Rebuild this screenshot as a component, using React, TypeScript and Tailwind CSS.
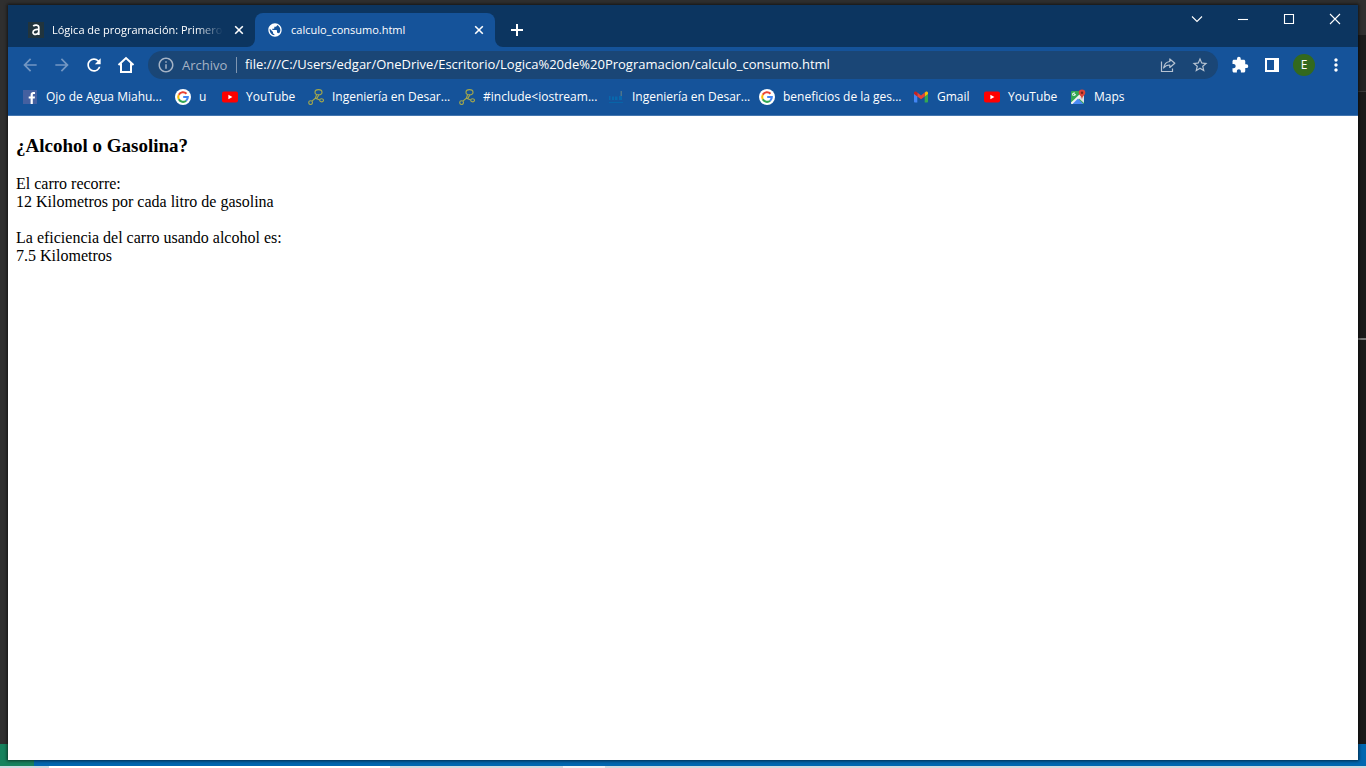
import type { ReactNode } from "react"
import {
  MdArrowBack,
  MdArrowForward,
  MdExtension,
  MdMoreVert,
  MdOutlineInfo,
  MdPublic,
  MdRefresh,
  MdStarBorder,
} from "react-icons/md"

const FacebookIcon = () => (
  <svg viewBox="0 0 16 16" className="size-4">
    <path d="M1 1h14v14H1z" fill="#4460a0" />
    <path d="M10.8 15V9.6h1.9l.3-2.1h-2.2V6.1c0-.6.2-1 1.1-1H13V3.2c-.2 0-.9-.1-1.7-.1-1.6 0-2.7 1-2.7 2.8v1.6H6.7v2.1h1.9V15z" fill="#fff" />
  </svg>
)

const GoogleIcon = () => (
  <svg viewBox="0 0 16 16" className="size-4">
    <circle cx="8" cy="8" r="8" fill="#fff" />
    <g fill="none" strokeWidth="2.1">
      <path d="M11.5 4.7A4.8 4.8 0 0 0 3.8 5.7" stroke="#ea4335" />
      <path d="M3.8 5.7A4.8 4.8 0 0 0 3.8 10.3" stroke="#fbbc05" />
      <path d="M3.8 10.3A4.8 4.8 0 0 0 11.1 11.7" stroke="#34a853" />
      <path d="M11.1 11.7A4.8 4.8 0 0 0 12.8 8H8.2" stroke="#4285f4" />
    </g>
  </svg>
)

const YouTubeIcon = () => (
  <svg viewBox="0 0 16 16" className="size-4">
    <rect y="2.5" width="16" height="11" rx="2" fill="#f00" />
    <path d="M6.4 5.7v4.6L10.4 8z" fill="#fff" />
  </svg>
)

const NodesIcon = () => (
  <svg viewBox="0 0 16 16" className="size-4" fill="none" stroke="#a5a84b" strokeWidth="1.1">
    <ellipse cx="10.5" cy="3.2" rx="3.5" ry="2.6" />
    <circle cx="2.6" cy="13.6" r="1.9" />
    <ellipse cx="13.6" cy="11.3" rx="1.9" ry="1.6" />
    <path d="M8.6 5.4 7.4 9.2l-3.5 3M7.4 9.2l4.4 1.7M11 5.8 8.8 9.4" />
  </svg>
)

const CourseIcon = () => (
  <svg viewBox="0 0 16 16" className="size-4">
    <path d="M1 7h1.5v4H1zM4 7.5h2V11H4zM7 7.5h2.5V11H7zM11 7h3v4h-3z" fill="#0868ad" />
    <path d="M1 13h14v1H1z" fill="#0864a8" />
    <path d="M12.5 2h1.5v5h-1.5z" fill="#4d758c" />
  </svg>
)

const GmailIcon = () => (
  <svg viewBox="0 0 16 16" className="size-4">
    <path d="M1 4v8.5c0 .5.4 1 1 1h2.3V6.6z" fill="#4285f4" />
    <path d="M15 4v8.5c0 .5-.4 1-1 1h-2.3V6.6z" fill="#34a853" />
    <path d="M11.7 3.7v3.8L15 5V3.9c0-1.3-1.4-1.9-2.3-1.2z" fill="#fbbc04" />
    <path d="M4.3 7.5V3.6L8 6.4l3.7-2.8v3.9L8 10.3z" fill="#ea4335" />
    <path d="M1 3.9V5l3.3 2.5V3.6l-1-.8C2.4 2.1 1 2.7 1 3.9z" fill="#c5221f" />
  </svg>
)

const MapsIcon = () => (
  <svg viewBox="0 0 16 16" className="size-4">
    <rect x="1" y="2" width="13" height="13" rx="1" fill="#34a853" />
    <path d="M1 13.5 12 3l2 2.5L4 15H2c-.6 0-1-.4-1-1z" fill="#f1f1f1" />
    <path d="M2.5 15 8 9.5l5.5 5.5z" fill="#4a89f3" />
    <path d="M9 9.5 14 14V6z" fill="#dce0e3" />
    <path d="M5.8 5H4.2v1h.7c-.7 1-2.1.3-1.7-.8.3-.7 1-.8 1.5-.4l.6-.7C4 3 2 3.8 2.2 5.6c.3 2.2 3.7 2 3.6-.6z" fill="#fff" />
    <path d="M12 .5a3.300 3.300 0 0 0-3.300 3.300c0 2.300 2.700 3 3.300 6.600.6-3.600 3.300-4.300 3.300-6.600A3.300 3.300 0 0 0 12 .5z" fill="#db4437" />
    <circle cx="12" cy="3.8" r="1.2" fill="#7b231e" />
  </svg>
)

const AluraIcon = () => (
  <svg viewBox="0 0 16 16" className="size-4 shrink-0">
    <path d="M0 0h16v16H0z" fill="#21343d" />
    <path d="M5.2 4.2C6.8 2.5 10.8 2.6 10.8 5.6V13M10.6 7.5C7.5 7.2 5 8 5 10.4c0 3 5.600 2.400 5.600-.6" fill="none" stroke="#fff" strokeWidth="1.7" />
  </svg>
)

const bookmarks: { label: string; width: string; icon: ReactNode }[] = [
  { label: "Ojo de Agua Miahu...", width: "w-[153px]", icon: <FacebookIcon /> },
  { label: "u", width: "w-[47px]", icon: <GoogleIcon /> },
  { label: "YouTube", width: "w-[86px]", icon: <YouTubeIcon /> },
  { label: "Ingeniería en Desar...", width: "w-[151px]", icon: <NodesIcon /> },
  { label: "#include<iostream...", width: "w-[149px]", icon: <NodesIcon /> },
  { label: "Ingeniería en Desar...", width: "w-[151px]", icon: <CourseIcon /> },
  { label: "beneficios de la ges...", width: "w-[154px]", icon: <GoogleIcon /> },
  { label: "Gmail", width: "w-[71px]", icon: <GmailIcon /> },
  { label: "YouTube", width: "w-[86px]", icon: <YouTubeIcon /> },
  { label: "Maps", width: "w-[70px]", icon: <MapsIcon /> },
]

function IconButton({ label, className = "", children }: { label: string; className?: string; children: ReactNode }) {
  return (
    <button type="button" aria-label={label} className={`flex h-7 w-8 shrink-0 items-center justify-center ${className}`}>
      {children}
    </button>
  )
}

function WindowButton({ label, d }: { label: string; d: string }) {
  return (
    <button type="button" aria-label={label} className="flex h-7 w-[46px] items-center justify-center">
      <svg viewBox="0 0 12 12" className="size-3" fill="none" stroke="#fff" strokeWidth="1.1">
        <path d={d} />
      </svg>
    </button>
  )
}

function TabClose() {
  return (
    <button type="button" aria-label="Cerrar pestaña" className="flex size-4 shrink-0 items-center justify-center">
      <svg viewBox="0 0 16 16" className="size-4" stroke="#fff" strokeWidth="1.6">
        <path d="m4.2 4.2 7.6 7.6M11.8 4.2l-7.6 7.6" />
      </svg>
    </button>
  )
}

function TabStrip() {
  return (
    <div className="flex h-[42px] bg-[#0c3560] pl-2">
      <div className="mt-2 flex h-[34px] w-[239px] items-center gap-2 pr-2 pl-3">
        <AluraIcon />
        <span className="min-w-0 flex-1 text-[11px] whitespace-nowrap [mask-image:linear-gradient(to_right,black_84%,transparent)]">
          Lógica de programación: Primero
        </span>
        <TabClose />
      </div>
      <svg viewBox="0 0 8 8" className="-ml-2 size-2 shrink-0 self-end" fill="#15539a">
        <path d="M8 0v8H0a8 8 0 0 0 8-8z" />
      </svg>
      <div className="mt-2 flex h-[34px] w-60 items-center gap-2 rounded-t-lg bg-[#15539a] pr-2 pl-3">
        <MdPublic className="size-4 shrink-0" />
        <span className="min-w-0 flex-1 text-[11px] whitespace-nowrap">calculo_consumo.html</span>
        <TabClose />
      </div>
      <svg viewBox="0 0 8 8" className="size-2 shrink-0 self-end" fill="#15539a">
        <path d="M0 0v8h8a8 8 0 0 1-8-8z" />
      </svg>
      <button type="button" aria-label="Nueva pestaña" className="mt-[11px] flex size-7 items-center justify-center">
        <svg viewBox="0 0 12 12" className="size-3" stroke="#fff" strokeWidth="2">
          <path d="M6 0v12M0 6h12" />
        </svg>
      </button>
      <div className="ml-auto flex">
        <WindowButton label="Buscar pestañas" d="m1 3.5 5 5 5-5" />
        <WindowButton label="Minimizar" d="M1 6.5h10" />
        <WindowButton label="Maximizar" d="M1.5 1.5h9v9h-9z" />
        <WindowButton label="Cerrar" d="m1 1 10 10M11 1 1 11" />
      </div>
    </div>
  )
}

function Toolbar() {
  return (
    <div className="flex h-9 items-center px-[6px]">
      <IconButton label="Atrás" className="text-[#7397c3]">
        <MdArrowBack className="size-5" />
      </IconButton>
      <IconButton label="Adelante" className="text-[#7397c3]">
        <MdArrowForward className="size-5" />
      </IconButton>
      <IconButton label="Recargar">
        <MdRefresh className="size-5" />
      </IconButton>
      <IconButton label="Inicio">
        <svg viewBox="0 0 18 18" className="size-[18px]" fill="none" stroke="#fff" strokeWidth="2">
          <path d="M1.5 9 9 2l7.5 7M4 7.5V16h10V7.5" />
        </svg>
      </IconButton>
      <div className="mx-[6px] flex h-7 flex-1 items-center rounded-full bg-[#1a4676] pr-[2px] pl-[9px]">
        <MdOutlineInfo className="size-[18px] shrink-0 text-[#a5b3c5]" />
        <label htmlFor="url" className="ml-[7px] w-[55px] border-r border-[#7f96b1] text-[13px] leading-4 text-[#a5b3c5]">
          Archivo
        </label>
        <input
          id="url"
          type="text"
          defaultValue="file:///C:/Users/edgar/OneDrive/Escritorio/Logica%20de%20Programacion/calculo_consumo.html"
          className="ml-2 min-w-0 flex-1 bg-transparent text-[13px] text-white outline-none"
        />
        <IconButton label="Compartir">
          <svg viewBox="0 0 18 18" className="size-[18px]" fill="none" stroke="#b6c3d2" strokeWidth="1.2">
            <path d="M2.5 5.5v10h11v-3" />
            <path d="M10.8 3v2.5C7 6 5.2 8.5 4.600 12c1.600-2.300 3.400-3 6.200-3v2.500L15.800 7.200z" strokeLinejoin="round" />
          </svg>
        </IconButton>
        <IconButton label="Añadir a marcadores" className="text-[#b6c3d2]">
          <MdStarBorder className="size-[18px]" />
        </IconButton>
      </div>
      <IconButton label="Extensiones">
        <MdExtension className="size-[18px]" />
      </IconButton>
      <IconButton label="Panel lateral">
        <svg viewBox="0 0 14 14" className="size-[14px]">
          <path d="M0 0h14v14H0zM2 2v10h7V2z" fill="#fff" fillRule="evenodd" />
        </svg>
      </IconButton>
      <IconButton label="Perfil">
        <span className="flex size-[22px] items-center justify-center rounded-full bg-[#33691e] text-[12px]">E</span>
      </IconButton>
      <IconButton label="Menú">
        <MdMoreVert className="size-5" />
      </IconButton>
    </div>
  )
}

function Backdrop() {
  return (
    <div className="col-start-1 row-start-1 flex flex-col bg-[#2f2f2f]">
      <div className="flex flex-1 justify-end">
        <div className="flex w-2 flex-col bg-[#1a1a1a]">
          <div className="h-[35px] bg-[#303030]" />
          <div className="h-[35px] bg-[#1c1c1c]" />
          <div className="h-[22px] border-b border-[#383838] bg-[#232323]" />
          <div className="mt-[246px] h-[2px] bg-[#777777]" />
        </div>
      </div>
      <div className="flex h-[22px] bg-[#0067b0]">
        <div className="w-[34px] bg-[#16825d]" />
      </div>
      <div className="flex h-[2px] bg-[#cfd8df] pl-[49px]">
        <div className="w-[341px] bg-white" />
        <div className="ml-[173px] w-[42px] bg-[#eef1f4]" />
      </div>
    </div>
  )
}

export default function App() {
  return (
    <div className="grid min-h-screen grid-cols-1">
      <Backdrop />
      <div className="col-start-1 row-start-1 mx-2 mt-[5px] mb-2 flex min-w-0 flex-col bg-white shadow-[0_0_3px_1px_rgba(0,0,0,0.6)]">
        <header className="border-b border-[#4476af] bg-[#15539a] font-['Open_Sans','Noto_Sans',sans-serif] text-white">
          <TabStrip />
          <Toolbar />
          <nav aria-label="Marcadores" className="flex h-8 overflow-hidden pb-1 pl-[14px]">
            {bookmarks.map(({ label, width, icon }, i) => (
              <a key={i} href="#" className={`flex shrink-0 items-center gap-2 text-[12px] whitespace-nowrap ${width}`}>
                {icon}
                {label}
              </a>
            ))}
          </nav>
        </header>
        <main className="p-2 font-['Liberation_Serif',serif] text-[16px] leading-[18px] text-black">
          <h3 className="mt-[11px] mb-[19px] text-[19px] leading-[21px] font-bold">¿Alcohol o Gasolina?</h3>
          <p>
            El carro recorre:
            <br />
            12 Kilometros por cada litro de gasolina
            <br />
            <br />
            La eficiencia del carro usando alcohol es:
            <br />
            7.5 Kilometros
          </p>
        </main>
      </div>
    </div>
  )
}
